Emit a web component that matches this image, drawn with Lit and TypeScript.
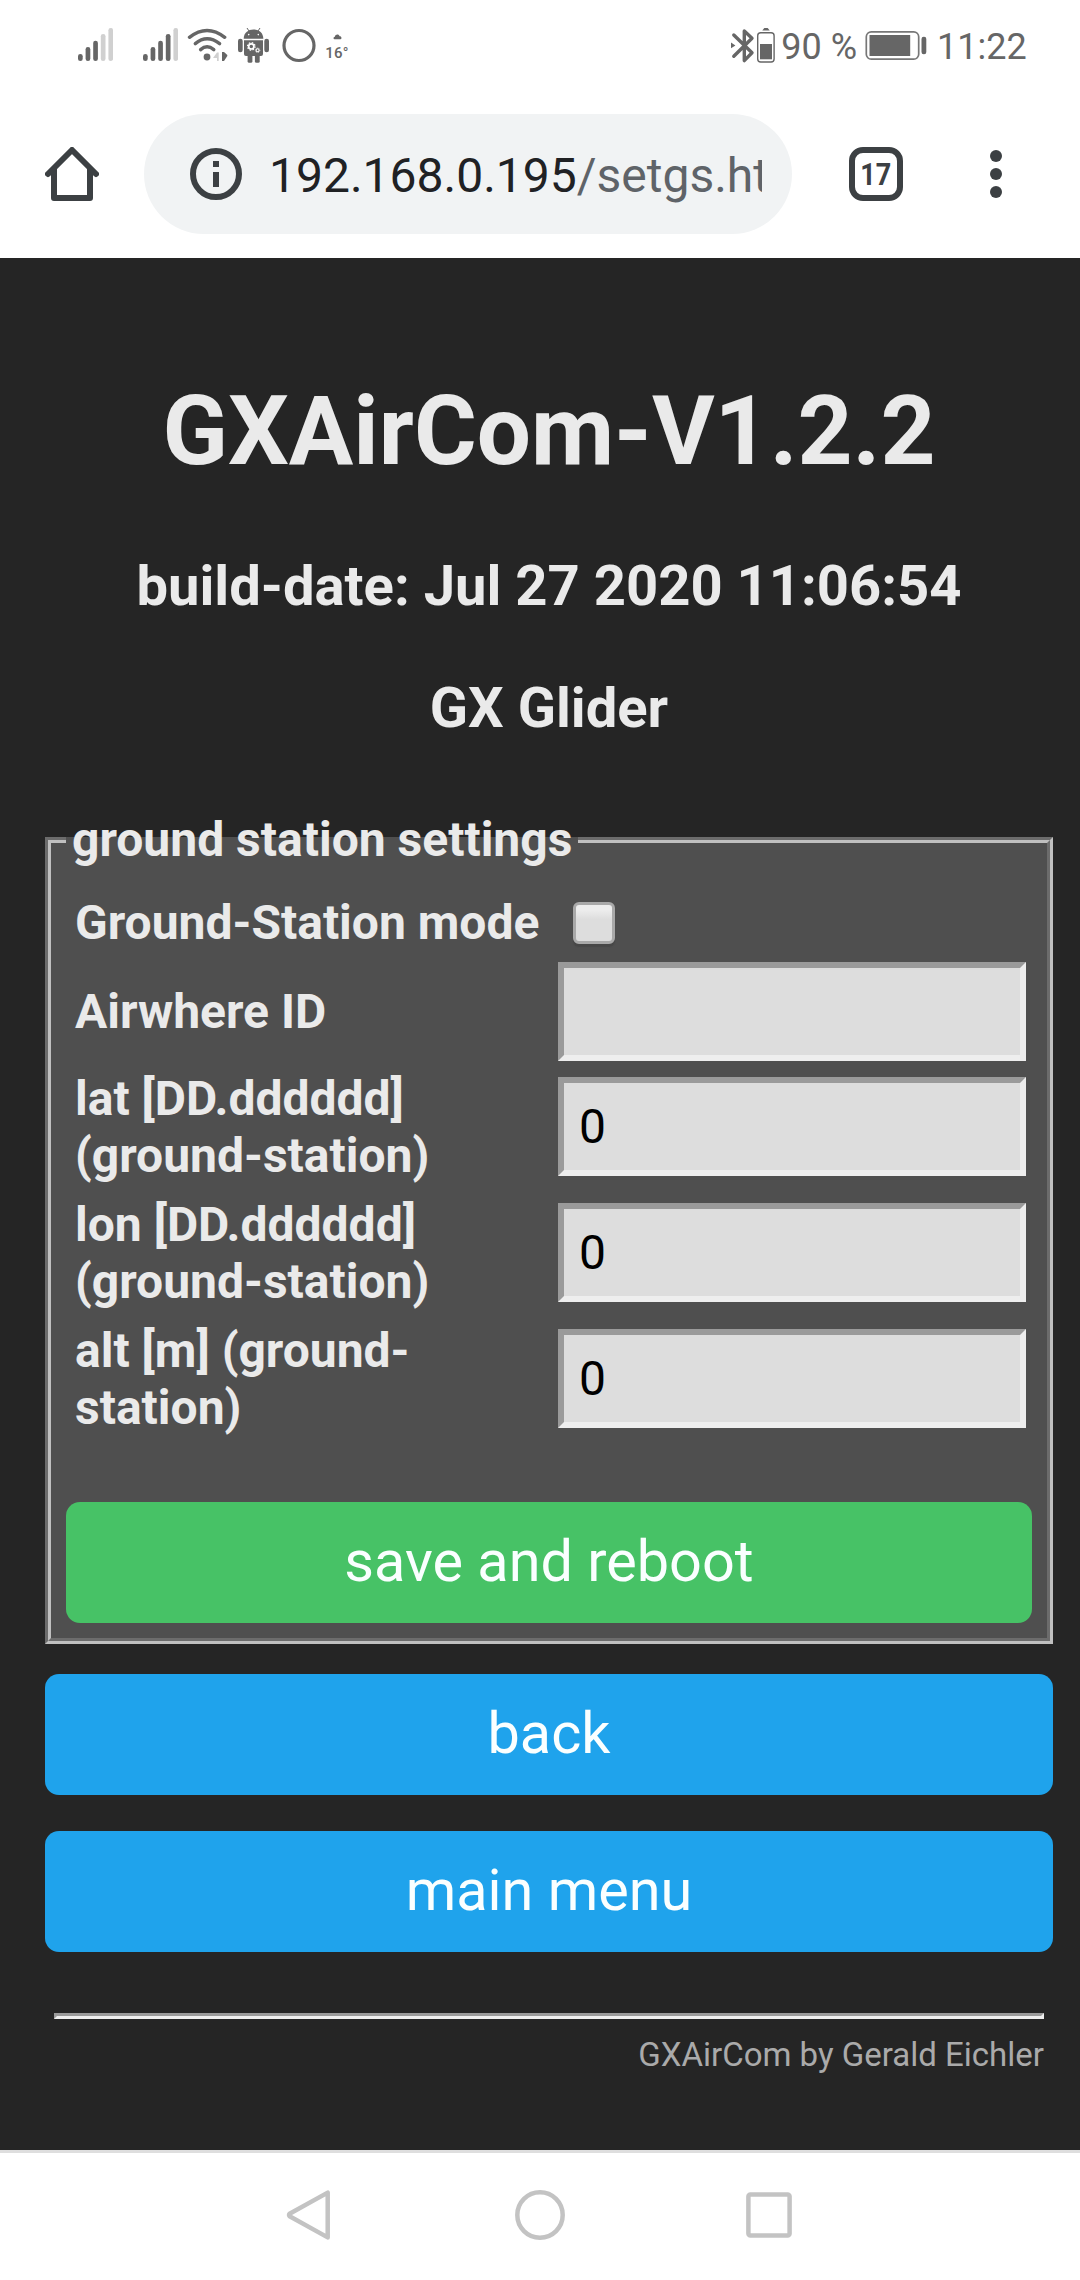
import { LitElement, html, svg, css } from "lit";
import { customElement, property, state } from "lit/decorators.js";

/* ---------- Android status bar ---------- */
@customElement("status-bar")
class StatusBar extends LitElement {
  static styles = css`
    :host { display: block; }
    .bar {
      display: flex; align-items: flex-start; height: 90px; box-sizing: border-box;
      padding: 25px 54px 0 78px; color: #666; background: #fff;
      font: 36px/40px Roboto, sans-serif;
    }
    svg { display: block; flex: none; }
    .second { margin-left: 30px; }
    .wifi { margin-left: 9px; }
    .robot { margin-left: 10px; }
    .ring { margin-left: 12px; }
    .weather {
      display: flex; flex-direction: column; align-items: center; width: 26px; margin-left: 8px;
      padding-top: 9px; font-size: 15px; font-weight: 500; line-height: 18px;
    }
    .cloud { margin-bottom: 4px; }
    .temp { letter-spacing: 0.2px; }
    .spacer { flex: 1; }
    .percent, .clock { white-space: pre; line-height: 44px; }
    .percent { margin-left: 5px; }
    .battery { margin-left: 8px; }
    .clock { margin-left: 10px; width: 89px; }
  `;

  private signal(level: number) {
    const tops = [29, 22, 15.7, 9, 3];
    return svg`${tops.map((y, i) => svg`
      <rect x=${i * 7.6} y=${y} width="4.7" height=${36 - y} rx="2.3"
        fill=${i < level ? "#666" : "#d0d0d0"}></rect>`)}`;
  }

  render() {
    return html`
      <div class="bar">
        <svg width="35" height="40">${this.signal(3)}</svg>
        <svg class="second" width="35" height="40">${this.signal(4)}</svg>
        <svg class="wifi" width="41" height="40" viewBox="187 25 41 40">
          <g fill="none" stroke="#666" stroke-width="3.4" stroke-linecap="round">
            <path d="M189.5 37.3Q207 23.6 224.7 37.3"></path>
            <path d="M195.3 43.6Q207 34 219.6 43.6"></path>
            <path d="M200.6 49.6Q207 44 213.8 49.6"></path>
          </g>
          <circle cx="207" cy="57" r="3.4" fill="#666"></circle>
          <path d="M213 58L217 52.4H218.7V61H217V58Z" fill="#d0d0d0"></path>
          <path d="M222 52H224L227.3 55V56L224 61H222Z" fill="#666"></path>
        </svg>
        <svg class="robot" width="32" height="40" viewBox="238 25 32 40">
          <g fill="#666">
            <path d="M243.7 38.8C243.7 33 248 29.6 253.5 29.6S263.3 33 263.3 38.8Z"></path>
            <path d="M244 40.2H263V54a2 2 0 0 1-2 2H246a2 2 0 0 1-2-2Z"></path>
            <rect x="238" y="38.8" width="4.7" height="13.4" rx="2.3"></rect>
            <rect x="264.3" y="38.8" width="4.7" height="13.4" rx="2.3"></rect>
            <rect x="247.6" y="53" width="4.8" height="9.8" rx="1.5"></rect>
            <rect x="254.9" y="53" width="4.8" height="9.8" rx="1.5"></rect>
          </g>
          <path d="M247 28L249 31M260 28L258 31" stroke="#666" stroke-width="1"></path>
          <circle cx="248.7" cy="34.6" r="0.8" fill="#fff"></circle>
          <circle cx="258.3" cy="34.6" r="0.8" fill="#fff"></circle>
          <circle cx="251.3" cy="46.4" r="2.6" fill="none" stroke="#fff" stroke-width="1.7"></circle>
          <circle cx="251.3" cy="46.4" r="3.8" fill="none" stroke="#fff" stroke-width="1.2" stroke-dasharray="1.5 1.48"></circle>
          <circle cx="257.6" cy="50.3" r="1.5" fill="none" stroke="#fff" stroke-width="1.1"></circle>
          <circle cx="257.6" cy="50.3" r="2.3" fill="none" stroke="#fff" stroke-width="0.7" stroke-dasharray="0.9 0.9"></circle>
        </svg>
        <svg class="ring" width="34" height="40" viewBox="281.3 25 34 40">
          <circle cx="298.3" cy="45.5" r="15" fill="none" stroke="#666" stroke-width="3.2"></circle>
        </svg>
        <div class="weather">
          <svg class="cloud" width="9" height="6" viewBox="0 0 9 6">
            <path d="M1.4 5.2C0 4.8 0.2 2.8 1.8 2.7C2.4 0 6 0 6.6 2.2C8.8 2 9 5 7.6 5.2Z" fill="#666"></path>
          </svg>
          <span class="temp">16°</span>
        </div>
        <span class="spacer"></span>
        <svg width="46" height="40" viewBox="730 25 46 40">
          <path d="M733.8 35L752 52.8L744.3 60.6V31L752 38.2L733.8 56.3" fill="none" stroke="#666"
            stroke-width="3.4" stroke-linejoin="round" stroke-linecap="round"></path>
          <path d="M731 42.6L735.4 45.4L731 48.2Z" fill="#666"></path>
          <rect x="757.7" y="32.7" width="16.4" height="29.3" rx="3" fill="none" stroke="#666" stroke-width="1.4"></rect>
          <rect x="760" y="44" width="12" height="15.3" fill="#666"></rect>
          <path d="M764.3 28H767.7L769.7 30.4H762.3Z" fill="#666"></path>
        </svg>
        <span class="percent">90 %</span>
        <svg class="battery" width="62" height="40" viewBox="865.5 25 62 40">
          <rect x="866.8" y="31.8" width="52.4" height="27.4" rx="5" fill="none" stroke="#777" stroke-width="1.7"></rect>
          <rect x="870" y="35" width="40.7" height="21" fill="#666"></rect>
          <rect x="922" y="36.7" width="4.8" height="17.6" rx="2.2" fill="#666"></rect>
        </svg>
        <span class="clock">11:22</span>
      </div>`;
  }
}

/* ---------- Browser toolbar ---------- */
@customElement("browser-toolbar")
class BrowserToolbar extends LitElement {
  @property() host = "";
  @property() path = "";
  @property({ type: Number }) tabs = 0;

  static styles = css`
    :host { display: block; }
    .toolbar {
      display: flex; align-items: center; height: 168px; box-sizing: border-box;
      padding: 0 78px 0 45px; background: #fff; font-family: Roboto, sans-serif;
    }
    svg { display: block; flex: none; }
    .address {
      display: flex; align-items: center; width: 648px; height: 120px; box-sizing: border-box;
      margin-left: 45px; padding: 0 30px 0 46px; border-radius: 60px; background: #f1f3f4;
    }
    .url {
      flex: 1; min-width: 0; margin-left: 27px; overflow: hidden; white-space: nowrap;
      font-size: 48px; line-height: 60px; color: #5f6368; padding-top: 3px;
    }
    .host { color: #202124; }
    .tabs {
      display: flex; align-items: center; justify-content: center; width: 54px; height: 54px;
      box-sizing: border-box; margin-left: 57px; border: 6px solid #3c4043; border-radius: 14px;
      color: #3c4043; font-size: 31px; font-weight: 700; line-height: 40px;
    }
    .count { transform: scaleX(0.87); padding-top: 2px; }
    .menu { margin-left: auto; }
  `;

  render() {
    return html`
      <div class="toolbar">
        <svg width="54" height="54" viewBox="45 147 54 54" fill="none" stroke="#3c4043" stroke-width="6">
          <path d="M54 168V198H90V168" stroke-linejoin="round"></path>
          <path d="M48 174L72 150L96 174" stroke-linecap="round" stroke-linejoin="round"></path>
        </svg>
        <div class="address">
          <svg width="52" height="52" viewBox="0 0 52 52">
            <circle cx="26" cy="26" r="23" fill="none" stroke="#3c4043" stroke-width="6"></circle>
            <path d="M23 13H29V19H23ZM23 24H29V39H23Z" fill="#3c4043"></path>
          </svg>
          <div class="url"><span class="host">${this.host}</span>${this.path}</div>
        </div>
        <div class="tabs"><span class="count">${this.tabs}</span></div>
        <svg class="menu" width="12" height="48" fill="#3c4043">
          <circle cx="6" cy="6" r="6"></circle>
          <circle cx="6" cy="24" r="6"></circle>
          <circle cx="6" cy="42" r="6"></circle>
        </svg>
      </div>`;
  }
}

/* ---------- Ground station form ---------- */
interface Field { label: string; value: string; }

@customElement("settings-page")
class SettingsPage extends LitElement {
  @state() private fields: Field[] = [
    { label: "lat [DD.dddddd] (ground-station)", value: "0" },
    { label: "lon [DD.dddddd] (ground-station)", value: "0" },
    { label: "alt [m] (ground-station)", value: "0" },
  ];

  static styles = css`
    :host { display: block; }
    .page {
      height: 1892px; box-sizing: border-box; padding: 117px 27px 0 45px;
      background: #252525; color: #eaeaea; font-family: Roboto, sans-serif;
    }
    h1, h3 { margin: 0; text-align: center; font-weight: 700; }
    h1 { font-size: 96px; line-height: 112px; }
    h3 { font-size: 56.16px; line-height: 66px; }
    .build { margin-top: 66px; }
    .device { margin-top: 56px; }
    fieldset {
      min-width: 0; margin: 71px 0 0; padding: 26px 15px 15px; box-sizing: border-box;
      border: 6px groove #c0c0c0; background: #4f4f4f; font-size: 48px; line-height: 57px;
    }
    legend { padding: 0 6px; font-weight: 700; line-height: 56px; }
    .grid {
      display: grid; grid-template-columns: 483px 468px; grid-template-rows: 68px 108px repeat(3, 126px);
      align-items: start; padding-left: 9px; font-weight: 700;
    }
    .single { margin-top: 21px; }
    .check {
      appearance: none; width: 42px; height: 42px; margin: 8px 0 0 15px; box-sizing: border-box;
      border: 3px solid #a9a9a9; border-radius: 6px; box-shadow: 0 3px 1px #474747;
      background: linear-gradient(#eee, #eee 12%, #ddd 40%);
    }
    .text {
      appearance: none; display: block; width: 468px; height: 99px; box-sizing: border-box; margin: 0;
      padding: 0 15px; border: 6px solid; border-color: #9a9a9a #eee #eee #9a9a9a; border-radius: 0;
      outline: 0; background: #ddd; color: #000; font: 48px Roboto, sans-serif;
    }
    .tall { margin-top: 7px; }
    button {
      display: block; width: 100%; height: 121px; margin: 0; padding: 0 0 2px; border: 0;
      border-radius: 14px; background: #1fa3ec; color: #faffff;
      font: 57.6px/119px Roboto, sans-serif; text-align: center;
    }
    .save { margin-top: 54px; background: #47c266; }
    .back { margin-top: 30px; }
    .main { margin-top: 36px; }
    .rule {
      height: 0; margin: 61px 9px 0; border: 3px solid; border-color: #9a9a9a #eee #eee #9a9a9a;
    }
    .credit {
      margin: 16px 9px 0; text-align: right; font-size: 33px; line-height: 39px; color: #aaa;
    }
  `;

  render() {
    return html`
      <div class="page">
        <h1>GXAirCom-V1.2.2</h1>
        <h3 class="build">build-date: Jul 27 2020 11:06:54</h3>
        <h3 class="device">GX Glider</h3>
        <fieldset>
          <legend>ground station settings</legend>
          <div class="grid">
            <label>Ground-Station mode</label>
            <input class="check" type="checkbox">
            <label class="single">Airwhere ID</label>
            <input class="text" type="text">
            ${this.fields.map((f) => html`
              <label>${f.label}</label>
              <input class="text tall" type="text" .value=${f.value}>`)}
          </div>
          <button class="save">save and reboot</button>
        </fieldset>
        <button class="back">back</button>
        <button class="main">main menu</button>
        <div class="rule"></div>
        <div class="credit">GXAirCom by Gerald Eichler</div>
      </div>`;
  }
}

/* ---------- Android navigation bar ---------- */
@customElement("nav-bar")
class NavBar extends LitElement {
  static styles = css`
    :host { display: block; }
    .nav {
      display: flex; align-items: center; justify-content: space-between; height: 130px;
      box-sizing: border-box; padding: 0 288px 3px 286px; border-top: 3px solid #dedede; background: #fff;
    }
    svg { display: block; fill: none; stroke: #c3c3c3; stroke-width: 4.5; stroke-linejoin: round; }
  `;
  render() {
    return html`
      <div class="nav">
        <svg width="48" height="52" viewBox="286 2189 48 52"><path d="M327.7 2192.6V2237.4L289.6 2216.2Q288.6 2215 289.6 2213.8Z"></path></svg>
        <svg width="50" height="50"><circle cx="25" cy="25" r="22.7"></circle></svg>
        <svg width="46" height="46"><rect x="2.4" y="2.4" width="41.2" height="41.2" rx="2"></rect></svg>
      </div>`;
  }
}

@customElement("app-root")
class AppRoot extends LitElement {
  static styles = css`
    :host { display: block; width: 1080px; height: 2280px; overflow: hidden; background: #fff; }
  `;
  render() {
    return html`
      <status-bar></status-bar>
      <browser-toolbar host="192.168.0.195" path="/setgs.html" tabs="17"></browser-toolbar>
      <settings-page></settings-page>
      <nav-bar></nav-bar>`;
  }
}
